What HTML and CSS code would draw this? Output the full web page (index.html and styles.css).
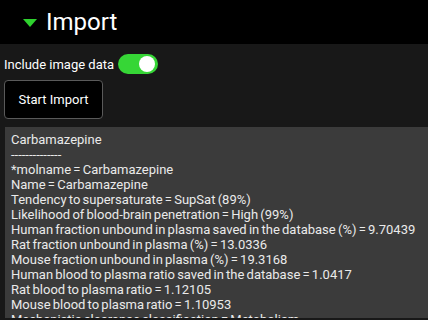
FILE: index.html
```html
<!DOCTYPE html>
<html lang="en">
<head>
    <meta charset="UTF-8">
    <title>Import</title>
    <link rel="stylesheet" href="styles.css">
</head>
<body>
    <div class="header">
        <span class="caret"></span>
        <h1>Import</h1>
    </div>
    <div class="panel">
        <div class="option">
            <span>Include image data</span>
            <span class="toggle on"><span class="knob"></span></span>
        </div>
        <button class="start">Start Import</button>
        <div class="log">Carbamazepine
--------------
*molname = Carbamazepine
Name = Carbamazepine
Tendency to supersaturate = SupSat (89%)
Likelihood of blood-brain penetration = High (99%)
Human fraction unbound in plasma saved in the database (%) = 9.70439
Rat fraction unbound in plasma (%) = 13.0336
Mouse fraction unbound in plasma (%) = 19.3168
Human blood to plasma ratio saved in the database = 1.0417
Rat blood to plasma ratio = 1.12105
Mouse blood to plasma ratio = 1.10953
Mechanistic clearance classification = Metabolism</div>
    </div>
</body>
</html>
```

FILE: styles.css
```css
body {
    margin: 0;
    background: #181818;
    color: #fff;
    font-family: Roboto, "Liberation Sans", sans-serif;
    font-size: 13px;
    overflow: hidden;
}

.header {
    height: 44px;
    background: #000;
    display: flex;
    align-items: center;
    padding-left: 23px;
}

.caret {
    width: 0;
    height: 0;
    border-left: 7px solid transparent;
    border-right: 7px solid transparent;
    border-top: 8px solid #2ed12e;
    margin-right: 9px;
    margin-top: 2px;
}

h1 {
    margin: 0;
    font-size: 24px;
    font-weight: normal;
}

.panel {
    padding: 10px 0 0 4px;
}

.option {
    display: flex;
    align-items: center;
    gap: 4px;
    height: 20px;
}

.toggle {
    width: 40px;
    height: 20px;
    border-radius: 10px;
    background: #36d636;
    position: relative;
}

.toggle .knob {
    position: absolute;
    right: 3px;
    top: 2px;
    width: 16px;
    height: 16px;
    border-radius: 50%;
    background: #fff;
}

.start {
    display: block;
    margin-top: 6px;
    width: 99px;
    height: 39px;
    background: #000;
    color: #fff;
    border: 1px solid #5a5a5a;
    border-radius: 4px;
    font-family: inherit;
    font-size: 13px;
}

.log {
    margin: 8px 0 0 1px;
    height: 186px;
    padding: 5px 0 0 6px;
    background: #3b3b3b;
    color: #eaeaea;
    white-space: pre;
    line-height: 15px;
    word-spacing: -1px;
    overflow: hidden;
}
```
